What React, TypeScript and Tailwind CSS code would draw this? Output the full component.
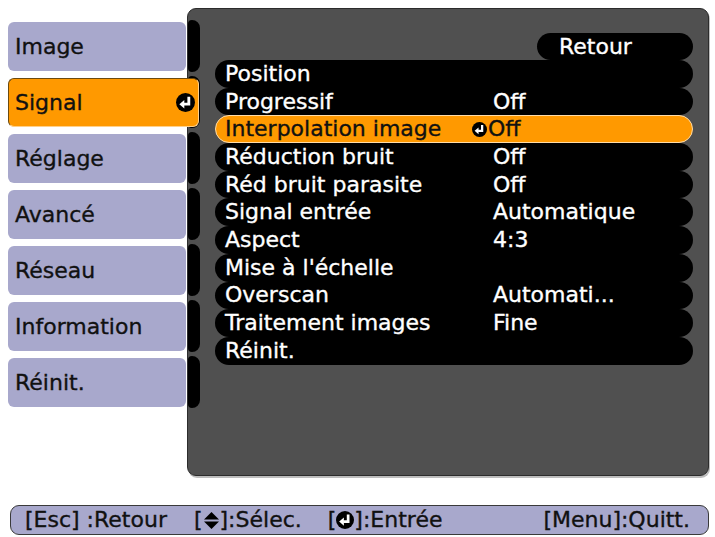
import * as React from "react";

const menu = ["Image", "Signal", "Réglage", "Avancé", "Réseau", "Information", "Réinit."];

const rows: { label: string; value?: string; active?: boolean }[] = [
  { label: "Position" },
  { label: "Progressif", value: "Off" },
  { label: "Interpolation image", value: "Off", active: true },
  { label: "Réduction bruit", value: "Off" },
  { label: "Réd bruit parasite", value: "Off" },
  { label: "Signal entrée", value: "Automatique" },
  { label: "Aspect", value: "4:3" },
  { label: "Mise à l'échelle" },
  { label: "Overscan", value: "Automati..." },
  { label: "Traitement images", value: "Fine" },
  { label: "Réinit." },
];

function EnterIcon({ size = 16 }: { size?: number }) {
  return (
    <svg width={size} height={size} viewBox="0 0 16 16" className="shrink-0">
      <circle cx="8" cy="8" r="8" fill="#000" />
      <path d="M10.8 3.2v6.2H6.5" stroke="#fff" strokeWidth="2.4" fill="none" />
      <path d="M2.8 9.4l4.2-3.6v7.2z" fill="#fff" />
    </svg>
  );
}

function UpDownIcon() {
  return (
    <svg width="17" height="19" viewBox="0 0 17 19" className="shrink-0">
      <path d="M8.5 1L16 8.5H1z" fill="#000" />
      <path d="M1 10.5h15L8.5 18z" fill="#000" />
    </svg>
  );
}

export default function App() {
  return (
    <div className="h-[537px] w-[715px] overflow-hidden bg-white font-['DejaVu_Sans',sans-serif] [-webkit-text-stroke:0.35px]">
      <div className="flex pt-[8px]">
        {/* left menu */}
        <div className="flex w-[187px] shrink-0 flex-col gap-[7px] pl-[8px] pt-[14px]">
          {menu.map((m) =>
            m === "Signal" ? (
              <div
                key={m}
                className="relative z-10 flex h-[49px] w-[191px] items-center justify-between rounded-[6px] border border-[#6b4a10] border-b-[#ffd08a] border-r-[#ffd08a] bg-[#ff9900] pl-[6px] pr-[3px] text-[22px] leading-none text-[#111]"
              >
                <span>{m}</span>
                <EnterIcon size={19} />
              </div>
            ) : (
              <div
                key={m}
                className="flex h-[49px] w-[178px] items-center rounded-[6px] bg-[#a8a8cc] pl-[7px] text-[22px] leading-none text-[#111]"
              >
                {m}
              </div>
            )
          )}
        </div>

        {/* panel */}
        <div className="flex h-[468px] w-[522px] shrink-0 rounded-[9px] border border-[#2c2c2c] bg-[#505050] shadow-[1px_2px_0_#bdbdbd]">
          <div className="flex w-[12px] shrink-0 flex-col gap-[4px] pt-[11px]">
            {menu.map((m) => (
              <div key={m} className="h-[52px] rounded-r-[8px] rounded-l-[4px] bg-black" />
            ))}
          </div>
          <div className="ml-[15px] flex w-[478px] flex-col pt-[24px]">
            <div className="flex h-[27px] w-[156px] items-center self-end rounded-full bg-black pl-[22px] text-[22px] leading-none text-white">
              Retour
            </div>
            {rows.map((r) =>
              r.active ? (
                <div
                  key={r.label}
                  className="flex h-[27.7px] items-center rounded-full border border-[#ffdca8] bg-[#ff9900] text-[22px] leading-none text-[#111]"
                >
                  <span className="w-[256px] pl-[9px]">{r.label}</span>
                  <EnterIcon size={15} />
                  <span className="pl-[1px]">{r.value}</span>
                </div>
              ) : (
                <div key={r.label} className="flex h-[27.7px] items-center rounded-full bg-black text-[22px] leading-none text-white">
                  <span className="w-[278px] pl-[10px]">{r.label}</span>
                  <span>{r.value}</span>
                </div>
              )
            )}
          </div>
        </div>
      </div>

      {/* help bar */}
      <div className="mx-[10px] mt-[29px] flex h-[30px] w-[699px] items-center rounded-[9px] border border-[#3a3a3a] bg-[#a8a8cc] pl-[14px] pr-[18px] text-[22px] leading-none text-[#111]">
        <span>[Esc] :Retour</span>
        <span className="ml-[27px] flex items-center">
          [<UpDownIcon />]:Sélec.
        </span>
        <span className="ml-[26px] flex items-center">
          [<EnterIcon size={18} />]:Entrée
        </span>
        <span className="ml-auto">[Menu]:Quitt.</span>
      </div>
    </div>
  );
}
